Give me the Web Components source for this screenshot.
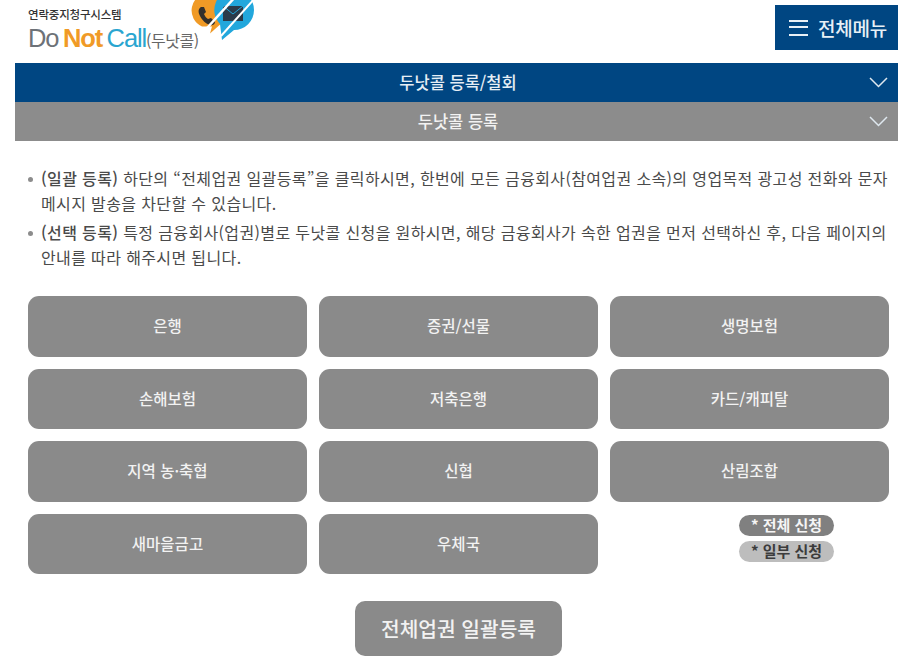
<!DOCTYPE html>
<html lang="ko">
<head>
<meta charset="utf-8">
<title>두낫콜 등록</title>
<style>
  html, body { margin: 0; padding: 0; background: #fff; }
  body { font-family: "Noto Sans CJK KR", "Liberation Sans", sans-serif; width: 898px; height: 669px; overflow: hidden; }
</style>
</head>
<body>
<dnc-header></dnc-header>
<dnc-bar>두낫콜 등록/철회</dnc-bar>
<dnc-bar tone="gray">두낫콜 등록</dnc-bar>
<dnc-notice>
  <dnc-note><b>(일괄 등록)</b> 하단의 “전체업권 일괄등록”을 클릭하시면, 한번에 모든 금융회사(참여업권 소속)의 영업목적 광고성 전화와 문자 메시지 발송을 차단할 수 있습니다.</dnc-note>
  <dnc-note><b>(선택 등록)</b> 특정 금융회사(업권)별로 두낫콜 신청을 원하시면, 해당 금융회사가 속한 업권을 먼저 선택하신 후, 다음 페이지의 안내를 따라 해주시면 됩니다.</dnc-note>
</dnc-notice>
<dnc-grid>
  <dnc-tile>은행</dnc-tile>
  <dnc-tile>증권/선물</dnc-tile>
  <dnc-tile>생명보험</dnc-tile>
  <dnc-tile>손해보험</dnc-tile>
  <dnc-tile>저축은행</dnc-tile>
  <dnc-tile>카드/캐피탈</dnc-tile>
  <dnc-tile>지역 농·축협</dnc-tile>
  <dnc-tile>신협</dnc-tile>
  <dnc-tile>산림조합</dnc-tile>
  <dnc-tile>새마을금고</dnc-tile>
  <dnc-tile>우체국</dnc-tile>
  <dnc-legend></dnc-legend>
</dnc-grid>
<dnc-submit>전체업권 일괄등록</dnc-submit>

<script>
// header: logo on the left, menu button on the right
class DncHeader extends HTMLElement {
  constructor() {
    super()
    this.attachShadow({ mode: 'open' })
    this.shadowRoot.innerHTML = `
      <style>
        :host { display: flex; justify-content: space-between; height: 63px; overflow: hidden; }
        .logo { display: flex; align-items: flex-start; padding-left: 28px; }
        .text { width: 170px; flex: none; }
        .sub { font-size: 11.500px; font-weight: 500; line-height: 14px; color: #333; margin-top: 7px; letter-spacing: -0.2px; }
        .name { font-family: "Liberation Sans", sans-serif; font-size: 25.500px; line-height: 30px; margin-top: 2px; color: #6d7278; letter-spacing: -1.1px; word-spacing: -1.5px; white-space: nowrap; }
        .name i { font-style: normal; color: #f09a26; font-weight: 700; }
        .name u { text-decoration: none; color: #2aa5d0; }
        .name small { font-family: "Noto Sans CJK KR", sans-serif; font-size: 16px; letter-spacing: -0.5px; color: #666; }
        svg { display: block; margin-left: -8px; flex: none; }
        .menu { display: flex; align-items: center; gap: 10px; box-sizing: border-box; width: 123px; height: 45px; margin-top: 5px; padding-left: 14px; background: #004682; color: #e8f0f6; font-size: 19px; font-weight: 500; white-space: nowrap; letter-spacing: -0.2px; }
        .burger { flex: none; width: 19px; height: 16px; border-top: 2px solid #e8f0f6; border-bottom: 2px solid #e8f0f6; box-sizing: border-box; position: relative; }
        .burger::after { content: ""; position: absolute; left: 0; right: 0; top: 4px; height: 2px; background: #e8f0f6; }
      </style>
      <div class="logo">
        <div class="text">
          <div class="sub">연락중지청구시스템</div>
          <div class="name">Do <i>Not</i> <u>Call</u><small>(두낫콜)</small></div>
        </div>
        <svg width="66" height="46" viewBox="0 0 66 46">
          <path d="M19-7a17.500 17.500 0 0 0-7 33.500h10l-2 7 9-8a17.500 17.500 0 0 0-10-32.500z" fill="#f09a26"/>
          <path d="M44-10a20 20 0 0 0-14 34l2 16 12-10a20 20 0 0 0 0-40z" fill="#22a7dc"/>
          <path d="M11 7c-3 2-3 5-1 9s6 8 10 9c3 1 5-1 5-3l-4-4-3 1c-2-1-3-3-4-5l2-2-2-5z" fill="#33302c"/>
          <path d="M33 6h20v15H33z" fill="#2b3b4a"/>
          <path d="M33 6l10 8 10-8" fill="none" stroke="#22a7dc" stroke-width="1"/>
          <path d="M8 38L46-4" stroke="#fff" stroke-width="2.500"/>
          <path d="M31 36L66-3" stroke="#fff" stroke-width="2"/>
        </svg>
      </div>
      <div class="menu"><span class="burger"></span>전체메뉴</div>`
  }
}

// accordion bar, blue or gray
class DncBar extends HTMLElement {
  constructor() {
    super()
    this.attachShadow({ mode: 'open' })
    this.shadowRoot.innerHTML = `
      <style>
        :host { display: flex; align-items: center; justify-content: center; position: relative; height: 39px; margin-left: 15px; padding: 0 0 2px 3px; box-sizing: border-box; background: #004682; color: #e6eef5; font-size: 16.500px; font-weight: 500; }
        :host([tone="gray"]) { background: #8c8c8c; color: #f2f2f2; }
        svg { position: absolute; right: 10px; top: 14px; }
      </style>
      <slot></slot>
      <svg width="19" height="11" viewBox="0 0 19 11"><path d="M1 1l8.500 8.500L18 1" fill="none" stroke="#dfe8ef" stroke-width="1.500"/></svg>`
  }
}

// bulleted explanation
class DncNotice extends HTMLElement {
  constructor() {
    super()
    this.attachShadow({ mode: 'open' })
    this.shadowRoot.innerHTML = `
      <style>
        :host { display: flex; flex-direction: column; gap: 4px; padding: 25px 8px 0 28px; color: #4a4a4a; font-size: 16px; line-height: 25px; letter-spacing: 0.37px; }
      </style>
      <slot></slot>`
  }
}

class DncNote extends HTMLElement {
  constructor() {
    super()
    this.attachShadow({ mode: 'open' })
    this.shadowRoot.innerHTML = `
      <style>
        :host { display: flex; gap: 8px; }
        .dot { flex: none; width: 5px; height: 5px; margin-top: 11px; border-radius: 50%; background: #8c8c8c; }
        ::slotted(b) { font-weight: 500; }
      </style>
      <span class="dot"></span>
      <div><slot></slot></div>`
  }
}

class DncGrid extends HTMLElement {
  constructor() {
    super()
    this.attachShadow({ mode: 'open' })
    this.shadowRoot.innerHTML = `
      <style>
        :host { display: grid; grid-template-columns: repeat(3, 279px); grid-auto-rows: 60.500px; column-gap: 12px; row-gap: 12px; padding: 26px 0 0 28px; }
      </style>
      <slot></slot>`
  }
}

class DncTile extends HTMLElement {
  constructor() {
    super()
    this.attachShadow({ mode: 'open' })
    this.shadowRoot.innerHTML = `
      <style>
        :host { display: flex; align-items: center; justify-content: center; padding-bottom: 2px; box-sizing: border-box; background: #8a8a8a; color: #f2f2f2; border-radius: 11px; font-size: 15.500px; font-weight: 500; }
      </style>
      <slot></slot>`
  }
}

// the two pills explaining tile states
class DncLegend extends HTMLElement {
  constructor() {
    super()
    this.attachShadow({ mode: 'open' })
    this.shadowRoot.innerHTML = `
      <style>
        :host { display: flex; flex-direction: column; align-items: flex-end; gap: 5px; padding: 1px 55px 0 0; font-size: 15px; font-weight: 700; }
        span { display: block; width: 95px; height: 21px; line-height: 20px; border-radius: 11px; text-align: center; white-space: nowrap; }
        .all { background: #808080; color: #f5f5f5; }
        .part { background: #bdbdbd; color: #3c3c3c; }
      </style>
      <span class="all">* 전체 신청</span>
      <span class="part">* 일부 신청</span>`
  }
}

class DncSubmit extends HTMLElement {
  constructor() {
    super()
    this.attachShadow({ mode: 'open' })
    this.shadowRoot.innerHTML = `
      <style>
        :host { display: flex; align-items: center; justify-content: center; box-sizing: border-box; width: 207px; height: 55px; margin: 27px 0 0 355px; padding-bottom: 2px; background: #8a8a8a; color: #f2f2f2; border-radius: 10px; font-size: 20.300px; font-weight: 500; }
      </style>
      <slot></slot>`
  }
}

customElements.define('dnc-header', DncHeader)
customElements.define('dnc-bar', DncBar)
customElements.define('dnc-notice', DncNotice)
customElements.define('dnc-note', DncNote)
customElements.define('dnc-grid', DncGrid)
customElements.define('dnc-tile', DncTile)
customElements.define('dnc-legend', DncLegend)
customElements.define('dnc-submit', DncSubmit)
</script>
</body>
</html>
